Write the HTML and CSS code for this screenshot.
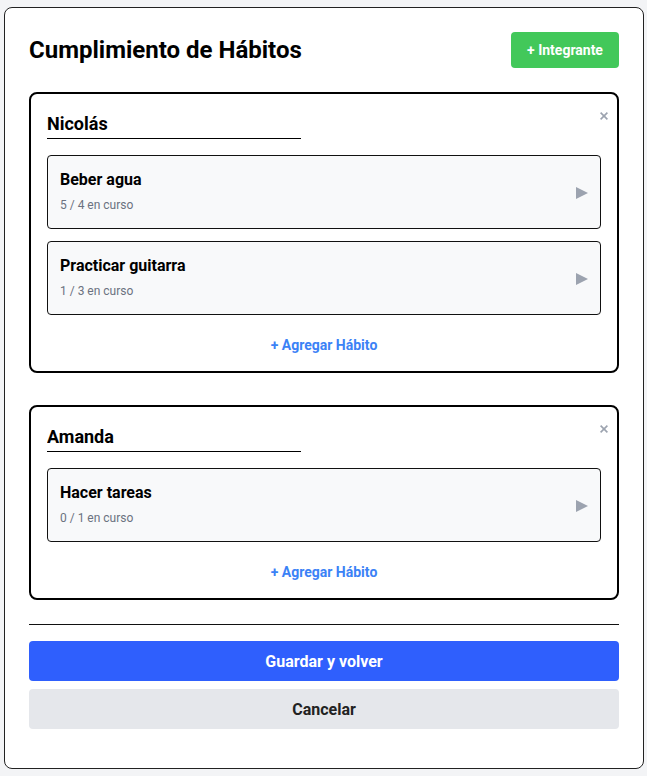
FILE: index.html
```html
<!DOCTYPE html>
<html lang="es">
<head>
<meta charset="utf-8">
<title>Cumplimiento de Hábitos</title>
<link rel="stylesheet" href="styles.css">
</head>
<body>
<main class="panel">
  <header class="panel-header">
    <h1 class="panel-title">Cumplimiento de Hábitos</h1>
    <button class="btn-add-member">+ Integrante</button>
  </header>

  <section class="members">
    <article class="member">
      <button class="member-close" aria-label="Eliminar">
        <svg width="8" height="8" viewBox="0 0 8 8"><path d="M0.6 0.6 L7.4 7.4 M7.4 0.6 L0.6 7.4" stroke="#9ca3af" stroke-width="1.6" fill="none"/></svg>
      </button>
      <input class="member-name" type="text" value="Nicolás">
      <div class="habits">
        <div class="habit">
          <div class="habit-info">
            <div class="habit-title">Beber agua</div>
            <div class="habit-meta">5 / 4 en curso</div>
          </div>
          <svg class="habit-arrow" width="12" height="12" viewBox="0 0 12 12"><polygon points="0,0 12,6 0,12" fill="#9ca3af"/></svg>
        </div>
        <div class="habit">
          <div class="habit-info">
            <div class="habit-title">Practicar guitarra</div>
            <div class="habit-meta">1 / 3 en curso</div>
          </div>
          <svg class="habit-arrow" width="12" height="12" viewBox="0 0 12 12"><polygon points="0,0 12,6 0,12" fill="#9ca3af"/></svg>
        </div>
      </div>
      <button class="btn-add-habit">+ Agregar Hábito</button>
    </article>

    <article class="member">
      <button class="member-close" aria-label="Eliminar">
        <svg width="8" height="8" viewBox="0 0 8 8"><path d="M0.6 0.6 L7.4 7.4 M7.4 0.6 L0.6 7.4" stroke="#9ca3af" stroke-width="1.6" fill="none"/></svg>
      </button>
      <input class="member-name" type="text" value="Amanda">
      <div class="habits">
        <div class="habit">
          <div class="habit-info">
            <div class="habit-title">Hacer tareas</div>
            <div class="habit-meta">0 / 1 en curso</div>
          </div>
          <svg class="habit-arrow" width="12" height="12" viewBox="0 0 12 12"><polygon points="0,0 12,6 0,12" fill="#9ca3af"/></svg>
        </div>
      </div>
      <button class="btn-add-habit">+ Agregar Hábito</button>
    </article>
  </section>

  <hr class="divider">

  <footer class="actions">
    <button class="btn btn-primary">Guardar y volver</button>
    <button class="btn btn-secondary">Cancelar</button>
  </footer>
</main>
</body>
</html>
```

FILE: styles.css
```css
* {
  box-sizing: border-box;
}

html, body {
  margin: 0;
  padding: 0;
}

body {
  background: #f3f4f6;
  font-family: Roboto, "Liberation Sans", sans-serif;
  color: #111;
  padding: 7px 3px 6px 4px;
}

.panel {
  background: #fff;
  border: 1px solid #222;
  border-radius: 8px;
  padding: 24px 24px 39px 24px;
}

.panel-header {
  display: flex;
  align-items: center;
  justify-content: space-between;
  height: 36px;
}

.panel-title {
  margin: 0;
  font-size: 24px;
  font-weight: 700;
  line-height: 36px;
  color: #000;
}

.btn-add-member {
  height: 36px;
  width: 108px;
  border: none;
  border-radius: 4px;
  background: #42c85a;
  color: #fff;
  font-family: inherit;
  font-size: 14px;
  font-weight: 700;
  padding: 0;
}

.members {
  display: flex;
  flex-direction: column;
  gap: 32px;
  margin-top: 24px;
}

.member {
  position: relative;
  border: 2px solid #000;
  border-radius: 8px;
  padding: 16px;
  display: flex;
  flex-direction: column;
}

.member-close {
  position: absolute;
  top: 16px;
  right: 7px;
  width: 12px;
  height: 12px;
  padding: 2px;
  border: none;
  background: transparent;
  display: flex;
  align-items: center;
  justify-content: center;
}

.member-name {
  width: 254px;
  border: none;
  border-bottom: 1px solid #000;
  padding: 3px 0 5px 0;
  margin: 0;
  font-family: inherit;
  font-size: 18px;
  font-weight: 700;
  line-height: 21px;
  height: 29px;
  color: #000;
  background: transparent;
  outline: none;
}

.habits {
  display: flex;
  flex-direction: column;
  gap: 12px;
  margin-top: 16px;
}

.habit {
  display: flex;
  align-items: center;
  justify-content: space-between;
  border: 1px solid #111;
  border-radius: 4px;
  background: #f8f9fa;
  padding: 13px 12px 13px 12px;
}

.habit-title {
  font-size: 16px;
  font-weight: 700;
  line-height: 22px;
  color: #000;
}

.habit-meta {
  margin-top: 4px;
  font-size: 12px;
  line-height: 20px;
  color: #6b7280;
}

.habit-arrow {
  display: block;
  margin-top: 1px;
}

.btn-add-habit {
  align-self: center;
  margin-top: 20px;
  border: none;
  background: transparent;
  padding: 0;
  height: 20px;
  font-family: inherit;
  font-size: 14px;
  font-weight: 700;
  line-height: 20px;
  color: #3b82f6;
}

.divider {
  border: none;
  border-top: 1px solid #111;
  margin: 24px 0 16px 0;
  height: 0;
}

.actions {
  display: flex;
  flex-direction: column;
  gap: 8px;
}

.btn {
  height: 40px;
  width: 100%;
  border: none;
  border-radius: 4px;
  font-family: inherit;
  font-size: 16px;
  font-weight: 700;
}

.btn-primary {
  background: #2f5ffd;
  color: #fff;
}

.btn-secondary {
  background: #e5e7eb;
  color: #222;
}
```
